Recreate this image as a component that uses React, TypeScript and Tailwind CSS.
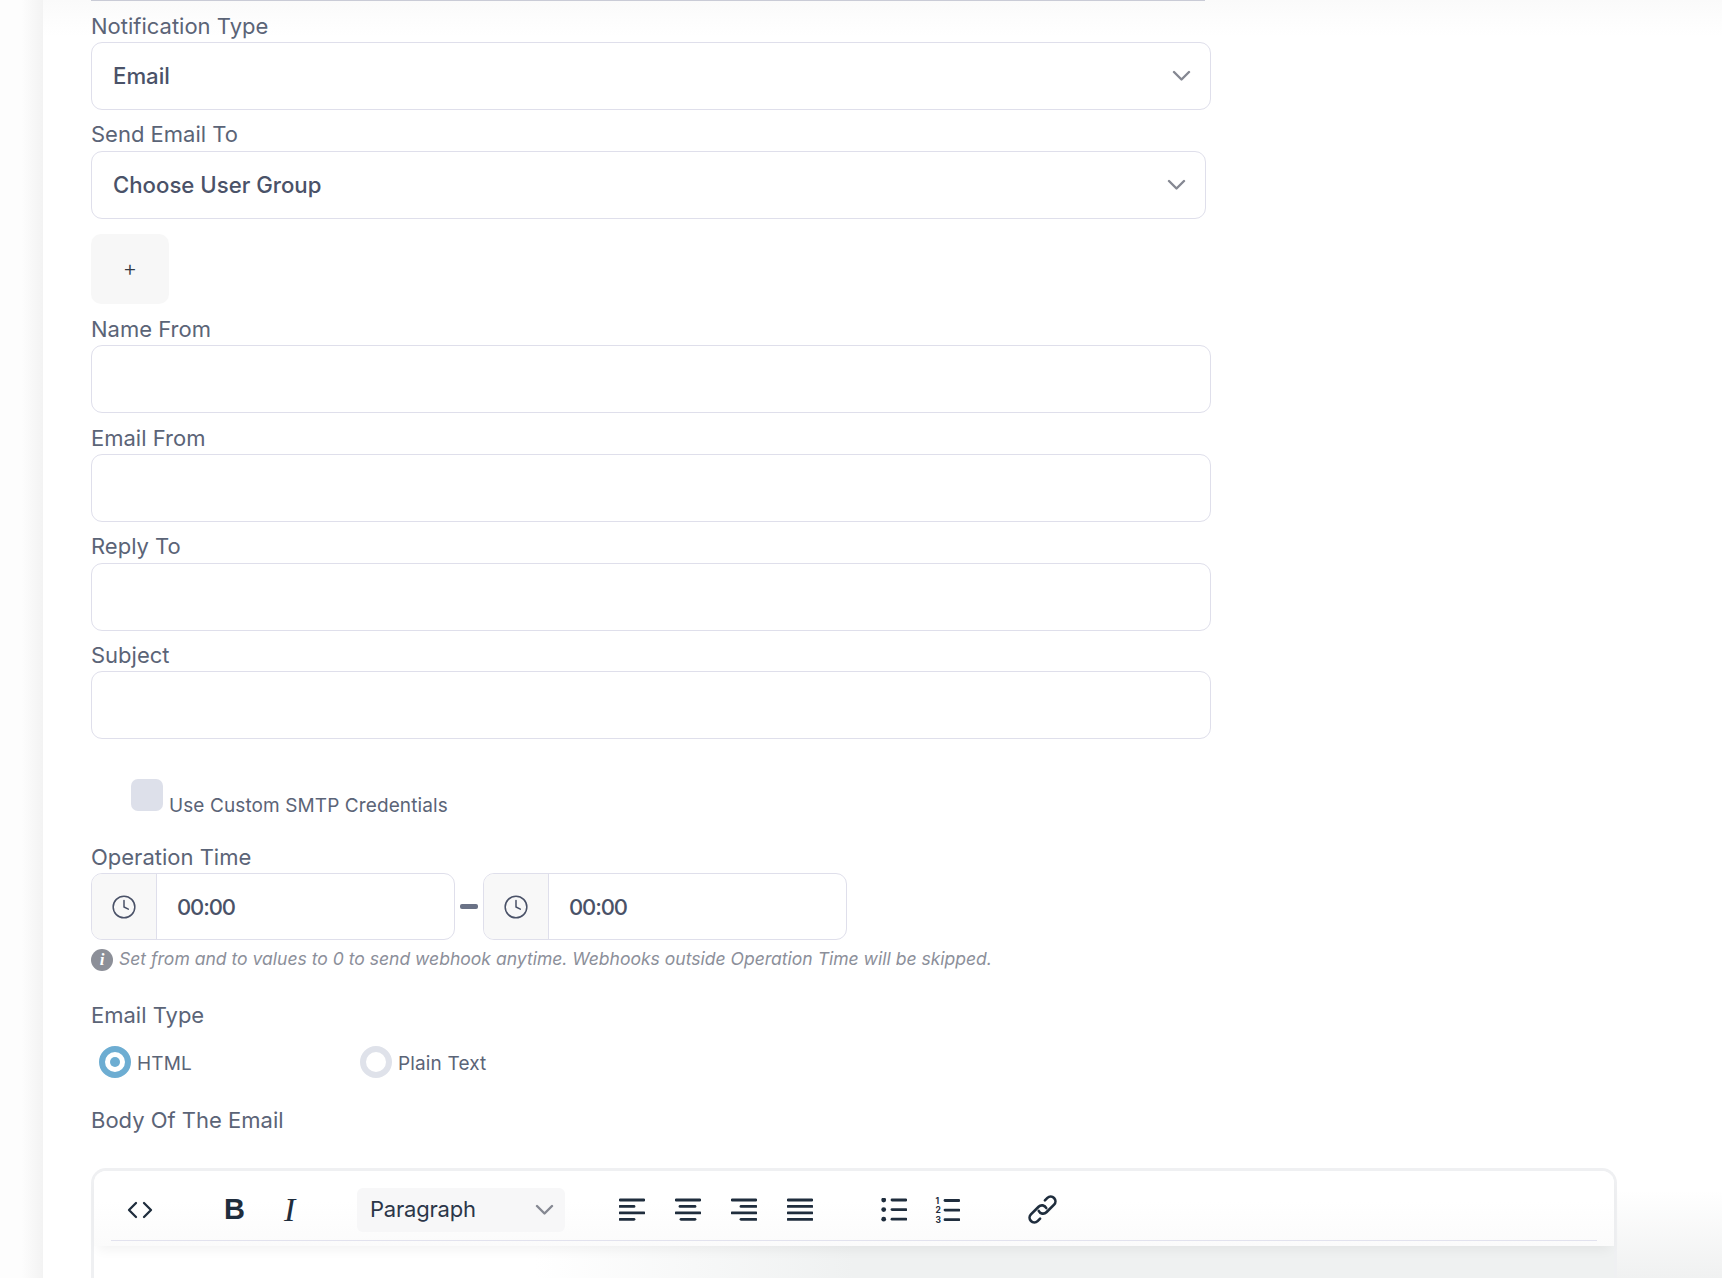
import { Clock } from "lucide-react";

const Chevron = ({ className = "" }: { className?: string }) => (
  <svg width="19" height="11" viewBox="0 0 19 11" fill="none" className={className}>
    <path d="M2 2l7.5 7.5L17 2" stroke="#858892" strokeWidth="2.4" strokeLinecap="round" strokeLinejoin="round" />
  </svg>
);

const Label = ({ children }: { children: React.ReactNode }) => (
  <label className="block h-[40.7px] pt-[10.5px] text-[22px] leading-[28px] text-[#5b6477]">{children}</label>
);

const Select = ({ text, width }: { text: string; width: string }) => (
  <div className={`flex h-[68px] items-center justify-between rounded-[11px] border border-[#dfdfeb] bg-white pl-[21px] pr-[19px] ${width}`}>
    <span className="text-[22.2px] font-medium text-[#4a5268]">{text}</span>
    <Chevron />
  </div>
);

const Input = () => <div className="h-[68px] w-[1120px] rounded-[11px] border border-[#dfdfeb] bg-white" />;

const TimeBox = () => (
  <div className="flex h-[67.5px] w-[364px] overflow-hidden rounded-[11px] border border-[#dfdfeb] bg-white">
    <div className="flex w-[65px] items-center justify-center border-r border-[#dfdfeb] bg-[#f8f8f8]">
      <Clock size={26} strokeWidth={1.4} className="text-[#4a5268]" />
    </div>
    <div className="flex items-center pl-[20px] pt-[2px] text-[22px] font-medium tracking-[-1.1px] text-[#4a5268]">00:00</div>
  </div>
);

const Radio = ({ checked, text, className }: { checked?: boolean; text: string; className: string }) => (
  <div className={`flex items-center ${className}`}>
    <span className={`flex h-[32px] w-[32px] items-center justify-center rounded-full border-[6px] bg-white ${checked ? "border-[#6dadd2]" : "border-[#dfe2ea]"}`}>
      {checked && <span className="h-[10px] w-[10px] rounded-full bg-[#6dadd2]" />}
    </span>
    <span className="ml-[6px] pt-[4px] text-[19px] leading-[28px] tracking-[0.15px] text-[#5b6477]">{text}</span>
  </div>
);

const Lines = ({ starts, ends }: { starts: number[]; ends: number[] }) => (
  <svg width="26" height="24" viewBox="0 0 26 24" fill="none">
    {[2, 8.4, 14.8, 21.3].map((y, i) => (
      <path key={i} d={`M${starts[i]} ${y}H${ends[i]}`} stroke="#1f2d3d" strokeWidth="2.8" strokeLinecap="round" />
    ))}
  </svg>
);

export default function App() {
  return (
    <div className="relative flex h-[1278px] overflow-hidden bg-white font-['Inter',sans-serif]">
      {/* left strip */}
      <div className="w-[43px] shrink-0 bg-linear-to-r from-[#fdfdfd] from-[50%] to-[#f3f3f3]" />

      <main className="relative min-w-0 flex-1 bg-linear-to-b from-[#fafafa] to-white to-[36px] bg-no-repeat pl-[48px]">
        <div className="h-px w-[1114px] bg-[#c9cbd6]" />

        <div className="-mt-px">
          <div className="h-[1.3px]" />
          <Label>Notification Type</Label>
          <Select text="Email" width="w-[1120px]" />
          <Label>Send Email To</Label>
          <Select text="Choose User Group" width="w-[1115px]" />

          <div className="mt-[15.8px] flex h-[70px] w-[78px] items-center justify-center rounded-[10px] bg-[#f7f7f7] pb-[2px] text-[22px] font-light text-[#333a45]">+</div>

          <Label>Name From</Label>
          <Input />
          <Label>Email From</Label>
          <Input />
          <Label>Reply To</Label>
          <Input />
          <Label>Subject</Label>
          <Input />

          <div className="ml-[40px] mt-[40px] flex h-[32px] items-start">
            <span className="h-[32px] w-[32px] rounded-[7px] bg-[#dde0ea]" />
            <span className="ml-[6px] mt-[14px] text-[19px] leading-[26px] tracking-[0.1px] text-[#5b6477]">Use Custom SMTP Credentials</span>
          </div>

          <div className="mt-[21px]">
            <Label>Operation Time</Label>
            <div className="flex items-center">
              <TimeBox />
              <span className="mx-[5px] h-[5px] w-[18px] rounded-[2px] bg-[#6a7286]" />
              <TimeBox />
            </div>
          </div>

          <div className="mt-[6px] flex items-center">
            <span className="flex h-[22px] w-[22px] items-center justify-center rounded-full bg-[#8c8f98] font-['Liberation_Serif',serif] text-[17px] font-bold italic text-white">i</span>
            <span className="ml-[6px] text-[17.55px] italic text-[#8c8f9a]">Set from and to values to 0 to send webhook anytime. Webhooks outside Operation Time will be skipped.</span>
          </div>

          <div className="mt-[28px] text-[22px] leading-[28px] text-[#5b6477]">Email Type</div>

          <div className="ml-[8px] mt-[17.5px] flex">
            <Radio checked text="HTML" className="w-[261px]" />
            <Radio text="Plain Text" className="" />
          </div>

          <div className="mt-[27.5px] text-[22px] leading-[28px] text-[#5b6477]">Body Of The Email</div>

          {/* editor */}
          <div className="mt-[34px] flex h-[200px] w-[1526px] flex-col rounded-t-[15px] border-[3px] border-b-0 border-[#eff0f2] bg-white">
            <div className="relative z-10 flex h-[75px] flex-col rounded-t-[12px] bg-linear-to-b from-white from-[40%] to-[#fbfbfb] shadow-[0_8px_12px_-4px_rgba(0,0,0,0.05)]">
              <div className="mx-[17px] flex h-[70px] items-center border-b border-[#e2e2ee] pt-[9px] text-[#1f2d3d]">
                <svg className="ml-[16px]" width="26" height="18" viewBox="0 0 26 18" fill="none">
                  <path d="M9 2L2 9l7 7M17 2l7 7-7 7" stroke="#1f2d3d" strokeWidth="2.3" strokeLinecap="round" strokeLinejoin="round" />
                </svg>
                <span className="ml-[71px] w-[20px] font-['Liberation_Sans',sans-serif] text-[29px] font-bold leading-none">B</span>
                <span className="ml-[40px] w-[18px] font-['Liberation_Serif',serif] text-[34px] italic leading-none">I</span>
                <div className="ml-[55px] flex h-[44px] w-[208px] items-center justify-between rounded-[6px] bg-[#f7f7f8] pl-[13px] pr-[11px]">
                  <span className="text-[22px] tracking-[-0.2px] text-[#2b3648]">Paragraph</span>
                  <Chevron />
                </div>
                <span className="ml-[54px] flex"><Lines starts={[1, 1, 1, 1]} ends={[25, 15, 25, 15]} /></span>
                <span className="ml-[30px] flex"><Lines starts={[1, 5, 1, 6]} ends={[25, 20, 25, 20]} /></span>
                <span className="ml-[30px] flex"><Lines starts={[1, 10, 1, 10]} ends={[25, 25, 25, 25]} /></span>
                <span className="ml-[30px] flex"><Lines starts={[1, 1, 1, 1]} ends={[25, 25, 25, 25]} /></span>
                <svg className="ml-[68px]" width="26" height="24" viewBox="0 0 26 24" fill="none">
                  {[2, 11.6, 21.2].map((y) => (
                    <g key={y}>
                      <circle cx="2.7" cy={y} r="2.4" fill="#1f2d3d" />
                      <path d={`M11 ${y}H25`} stroke="#1f2d3d" strokeWidth="2.8" strokeLinecap="round" />
                    </g>
                  ))}
                </svg>
                <svg className="ml-[28px]" width="25" height="28" viewBox="0 0 25 28" fill="none">
                  {["1", "2", "3"].map((n, i) => (
                    <g key={n}>
                      <text x="0.5" y={7.5 + i * 9.6} fontSize="8.5" fontWeight="700" fill="#1f2d3d" fontFamily="Inter">{n}</text>
                      <path d={`M10 ${4.5 + i * 9.6}H24`} stroke="#1f2d3d" strokeWidth="2.8" strokeLinecap="round" />
                    </g>
                  ))}
                </svg>
                <svg className="ml-[66px]" width="33" height="33" viewBox="0 0 30 30" fill="none">
                  <path d="M11.6 16.3A4.3 4.3 0 0 0 18.54 17.54L25.54 10.54A4.3 4.3 0 0 0 19.46 4.46L17.2 6.7" stroke="#1f2d3d" strokeWidth="2.4" strokeLinecap="round" strokeLinejoin="round" />
                  <path d="M18.4 13.7A4.3 4.3 0 0 0 11.46 12.46L4.46 19.46A4.3 4.3 0 0 0 10.54 25.54L12.8 23.3" stroke="#1f2d3d" strokeWidth="2.4" strokeLinecap="round" strokeLinejoin="round" />
                </svg>
              </div>
            </div>
            <div className="flex-1 bg-linear-to-r from-transparent from-[29%] to-[#eff1f1] to-[50%]" />
          </div>
        </div>
      </main>

      {/* fade in the bottom right corner */}
      <div className="pointer-events-none absolute bottom-0 right-0 h-[88px] w-[105px] bg-linear-to-b from-white to-[#f0f1f1]" />
    </div>
  );
}
